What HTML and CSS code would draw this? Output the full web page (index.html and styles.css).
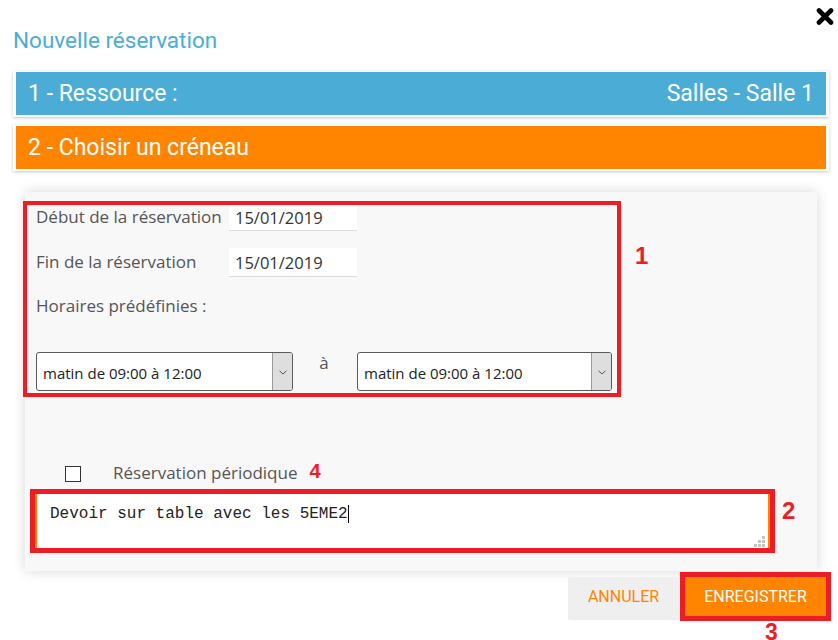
FILE: index.html
```html
<!DOCTYPE html>
<html lang="fr">
<head>
<meta charset="utf-8">
<title>Nouvelle réservation</title>
<link rel="stylesheet" href="styles.css">
</head>
<body>
<div class="modal">
  <div class="close-row">
    <svg class="close" width="18" height="17" viewBox="0 0 18 17" aria-label="Fermer">
      <path d="M3 2.5 L15 14.5 M15 2.5 L3 14.5" stroke="#000" stroke-width="4.6" stroke-linecap="round"/>
    </svg>
  </div>
  <h1 class="title">Nouvelle réservation</h1>

  <div class="step">
    <div class="step-bar blue"><span>1 - Ressource :</span><span>Salles - Salle 1</span></div>
  </div>
  <div class="step step-2">
    <div class="step-bar orange"><span>2 - Choisir un créneau</span></div>
  </div>

  <div class="panel">
    <div class="annot-box box-1">
      <div class="row row-first">
        <label class="lbl">Début de la réservation</label>
        <div class="date-input">15/01/2019</div>
      </div>
      <div class="row row-second">
        <label class="lbl">Fin de la réservation</label>
        <div class="date-input">15/01/2019</div>
      </div>
      <div class="row row-third">
        <label class="lbl">Horaires prédéfinies :</label>
      </div>
      <div class="selects">
        <div class="select sel-1">
          <span class="sel-text">matin de 09:00 à 12:00</span>
          <span class="sel-btn"><svg width="8" height="5" viewBox="0 0 8 5"><path d="M0.5 0.8 L4 4 L7.5 0.8" fill="none" stroke="#555" stroke-width="1"/></svg></span>
        </div>
        <span class="a-sep">à</span>
        <div class="select sel-2">
          <span class="sel-text">matin de 09:00 à 12:00</span>
          <span class="sel-btn"><svg width="8" height="5" viewBox="0 0 8 5"><path d="M0.5 0.8 L4 4 L7.5 0.8" fill="none" stroke="#555" stroke-width="1"/></svg></span>
        </div>
      </div>
      <span class="annot-num num-1">1</span>
    </div>

    <div class="check-row">
      <span class="checkbox"></span>
      <span class="check-label">Réservation périodique</span>
      <span class="annot-inline">4</span>
    </div>

    <div class="annot-box box-2">
      <div class="textarea">Devoir sur table avec les 5EME2<span class="caret"></span>
        <svg class="grip" width="11" height="11" viewBox="0 0 11 11">
          <rect x="8" y="0" width="3" height="3" fill="#c4c4c4"/>
          <rect x="4" y="4" width="3" height="3" fill="#c4c4c4"/>
          <rect x="8" y="4" width="3" height="3" fill="#c4c4c4"/>
          <rect x="0" y="8" width="3" height="3" fill="#c4c4c4"/>
          <rect x="4" y="8" width="3" height="3" fill="#c4c4c4"/>
          <rect x="8" y="8" width="3" height="3" fill="#c4c4c4"/>
        </svg>
      </div>
      <span class="annot-num num-2">2</span>
    </div>
  </div>

  <div class="actions">
    <button class="btn btn-cancel">ANNULER</button>
    <div class="save-wrap">
      <button class="btn btn-save">ENREGISTRER</button>
      <span class="annot-num num-3">3</span>
    </div>
  </div>
</div>
</body>
</html>
```

FILE: styles.css
```css
* { box-sizing: border-box; }

html, body {
  margin: 0;
  padding: 0;
  background: #ffffff;
}

body {
  font-family: "Open Sans", "Noto Sans", sans-serif;
  width: 838px;
  height: 640px;
  overflow: hidden;
}

.modal {
  display: flex;
  flex-direction: column;
}

.close-row {
  display: flex;
  justify-content: flex-end;
  padding: 8px 4px 0 0;
  height: 25px;
}

.close { display: block; }

.title {
  margin: 3px 0 0 13px;
  font-family: Roboto, sans-serif;
  font-weight: 400;
  font-size: 22.5px;
  line-height: 25px;
  color: #4aadd5;
}

.step {
  margin: 18px 0 0 13px;
  width: 816px;
  background: #ffffff;
  padding: 1px 3px 2px 3px;
  box-shadow: 0 1px 3px rgba(0, 0, 0, 0.22);
}

.step-2 { margin-top: 8px; }

.step-bar {
  height: 43px;
  display: flex;
  align-items: center;
  justify-content: space-between;
  padding: 0 12px 0 12px;
  font-family: Roboto, sans-serif;
  font-size: 23px;
  color: #ffffff;
}

.blue { background: #4badd5; }
.orange { background: #ff8500; }

.panel {
  margin: 21px 0 0 25px;
  width: 792px;
  height: 379px;
  background: #f8f8f8;
  box-shadow: 0 0 12px rgba(0, 0, 0, 0.16);
  padding-top: 9px;
  display: flex;
  flex-direction: column;
}

.annot-box {
  position: relative;
  border: 4px solid #ee1c25;
}

.box-1 {
  margin-left: -2px;
  width: 598px;
  height: 196px;
  padding: 0 0 0 9px;
}

.row {
  display: grid;
  grid-template-columns: 193px 128px;
  align-items: center;
}

.row-first { height: 26px; }
.row-second { height: 29px; margin-top: 17px; }
.row-third { height: 26px; margin-top: 17px; }

.lbl {
  font-size: 17px;
  color: #555555;
  padding-bottom: 3px;
}

.date-input {
  height: 100%;
  background: #ffffff;
  border-bottom: 1px solid #dcdcdc;
  padding-left: 6px;
  display: flex;
  align-items: center;
  font-size: 16.5px;
  color: #333333;
}

.selects {
  display: flex;
  align-items: flex-start;
  margin-top: 32px;
}

.select {
  height: 39px;
  display: flex;
  background: #ffffff;
  border: 1px solid #5a5a5a;
  border-radius: 3px;
  overflow: hidden;
}

.sel-1 { width: 257px; }
.sel-2 { width: 255px; }

.sel-text {
  flex: 1;
  display: flex;
  align-items: center;
  padding: 3px 0 0 6px;
  font-size: 15px;
  color: #222222;
}

.sel-btn {
  width: 20px;
  background: #dedede;
  border-left: 1px solid #9a9a9a;
  display: flex;
  align-items: center;
  justify-content: center;
  padding-top: 1px;
}

.a-sep {
  width: 62px;
  text-align: center;
  font-size: 17px;
  line-height: 22px;
  color: #555555;
  margin-right: 2px;
}

.annot-num {
  position: absolute;
  font-family: "Liberation Sans", Arial, sans-serif;
  font-weight: 700;
  font-size: 24px;
  line-height: 24px;
  color: #ee1c25;
}

.num-1 { left: 608px; top: 39px; }
.num-2 { left: 747px; top: 5px; }
.num-3 { left: 80px; top: 43px; font-size: 23px; }

.check-row {
  display: flex;
  align-items: center;
  height: 22px;
  margin-top: 66px;
  padding-left: 40px;
}

.checkbox {
  width: 16px;
  height: 16px;
  border: 1px solid #333333;
  background: #ffffff;
}

.check-label {
  margin-left: 32px;
  font-size: 17px;
  color: #555555;
  padding-bottom: 3px;
}

.annot-inline {
  margin-left: 12px;
  font-family: "Liberation Sans", Arial, sans-serif;
  font-weight: 700;
  color: #ee1c25;
  position: relative;
  top: -3px;
  font-size: 20px;
}

.box-2 {
  margin: 4px 0 0 5px;
  width: 745px;
  height: 64px;
  border-width: 5px;
}

.textarea {
  position: relative;
  height: 100%;
  background: #ffffff;
  border-left: 2px solid #ff8500;
  border-right: 2px solid #ff8500;
  padding: 11px 0 0 13px;
  font-family: "Liberation Mono", "Courier New", monospace;
  font-size: 16px;
  line-height: 18px;
  color: #222222;
}

.caret {
  display: inline-block;
  width: 1px;
  height: 18px;
  background: #000000;
  vertical-align: top;
}

.grip {
  position: absolute;
  right: 3px;
  bottom: 1px;
}

.actions {
  display: flex;
  justify-content: flex-end;
  align-items: flex-start;
  margin-top: 1px;
  padding-right: 7px;
}

.btn {
  border: none;
  font-family: Roboto, sans-serif;
  font-size: 16px;
  padding: 0;
  cursor: pointer;
}

.btn-cancel {
  margin-top: 5px;
  width: 111px;
  height: 43px;
  background: #efefef;
  color: #ff8500;
  border-radius: 2px;
  padding-bottom: 4px;
  margin-right: 1px;
}

.save-wrap {
  position: relative;
  border: 5px solid #ee1c25;
  width: 151px;
  height: 49px;
}

.btn-save {
  display: block;
  width: 100%;
  height: 100%;
  background: #ff8500;
  color: #ffffff;
}
```
